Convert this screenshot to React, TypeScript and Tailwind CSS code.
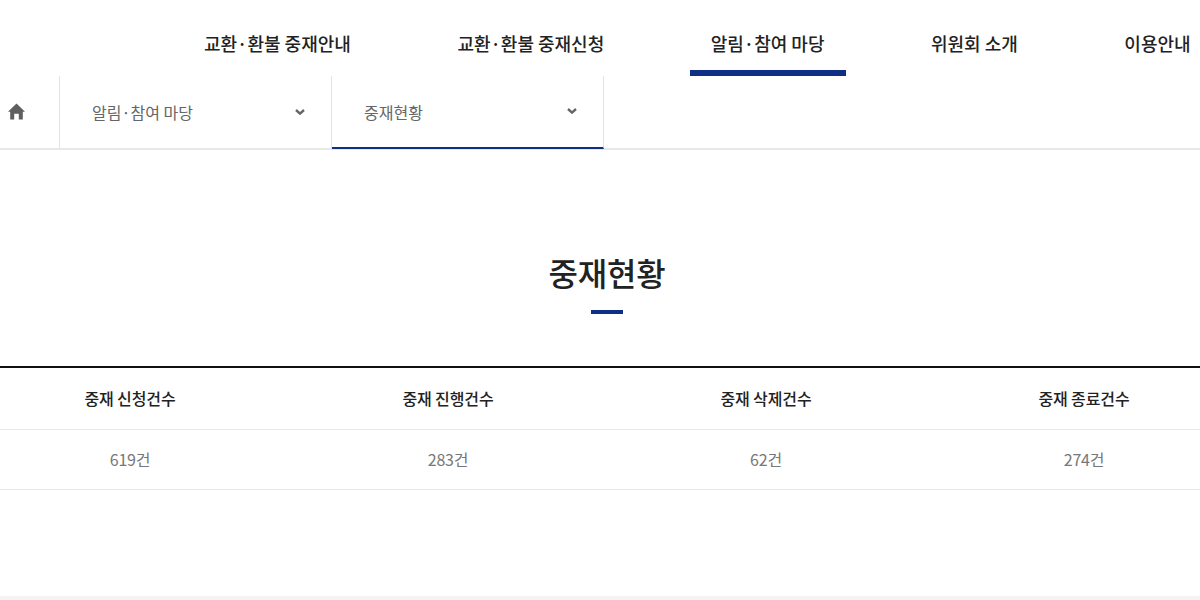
import React from "react";

const font = { fontFamily: '"Noto Sans CJK KR", "Noto Sans", sans-serif' };

const navItems = ["교환·환불 중재안내", "교환·환불 중재신청", "알림·참여 마당", "위원회 소개", "이용안내"];
const columns = [
  ["중재 신청건수", "619건"],
  ["중재 진행건수", "283건"],
  ["중재 삭제건수", "62건"],
  ["중재 종료건수", "274건"],
];

function Chevron() {
  return (
    <svg width="10" height="6" viewBox="0 0 10 6" className="shrink-0 -mt-[1px]">
      <path d="M1 1 L5 4.6 L9 1" fill="none" stroke="#666666" strokeWidth="2.4" />
    </svg>
  );
}

export default function App() {
  return (
    <div className="w-[1200px] h-[600px] overflow-hidden bg-white flex flex-col" style={font}>
      <nav className="h-[76px] flex pl-[183px] gap-[64.5px] shrink-0">
        {navItems.map((n, i) => (
          <div
            key={n}
            className={`h-[76px] px-[21px] pt-[31px] whitespace-nowrap text-[18px] leading-[25px] font-medium text-[#222222] border-b-[6px] ${i === 2 ? "border-[#0f2f86]" : "border-transparent"}`}
          >
            {n}
          </div>
        ))}
      </nav>
      <div className="h-[74px] flex border-b-2 border-[#e8e8e8] shrink-0">
        <div className="w-[60px] flex items-center border-r border-[#e3e3e3] pl-[8px]">
          <svg width="17" height="17" viewBox="0 0 17 17" className="-mt-[1px]">
            <path d="M8.5 0.5 L17 8.8 H14.8 V16.5 H10.8 V10.8 H6.2 V16.5 H2.2 V8.8 H0 Z" fill="#5f5f5f" />
          </svg>
        </div>
        <div className="w-[272px] flex items-center justify-between pl-[32px] pr-[26px] border-r border-[#e3e3e3] text-[16px] text-[#666666]">
          <span>알림·참여 마당</span>
          <Chevron />
        </div>
        <div className="w-[272px] h-[73px] flex items-center justify-between pl-[32px] pr-[26px] border-r border-[#e3e3e3] border-b-2 border-b-[#0f2f86] text-[16px] text-[#666666]">
          <span>중재현황</span>
          <Chevron />
        </div>
      </div>
      <div className="flex flex-col items-center pt-[98px] pl-[14px] shrink-0">
        <h1 className="text-[32px] leading-[48px] font-medium text-[#222222] tracking-[-0.25px]">중재현황</h1>
        <div className="w-[32px] h-[4px] bg-[#0f2f86] mt-[14px]" />
      </div>
      <div className="mt-[52px] border-t-2 border-[#111111] border-b border-b-[#e8e8e8] shrink-0">
        <div className="grid grid-cols-4 w-[1272px] -ml-[29px]">
          {columns.map(([h]) => (
            <div key={h} className="h-[62px] pb-[1px] flex items-center justify-center text-[16px] tracking-[-0.1px] font-medium text-[#222222] border-b border-[#e8e8e8]">
              {h}
            </div>
          ))}
          {columns.map(([h, v]) => (
            <div key={h} className="h-[59px] pb-[2px] flex items-center justify-center text-[16px] tracking-[-0.2px] text-[#777777]">
              {v}
            </div>
          ))}
        </div>
      </div>
      <div className="mt-auto h-[4px] bg-[#f3f3f3] shrink-0" />
    </div>
  );
}
